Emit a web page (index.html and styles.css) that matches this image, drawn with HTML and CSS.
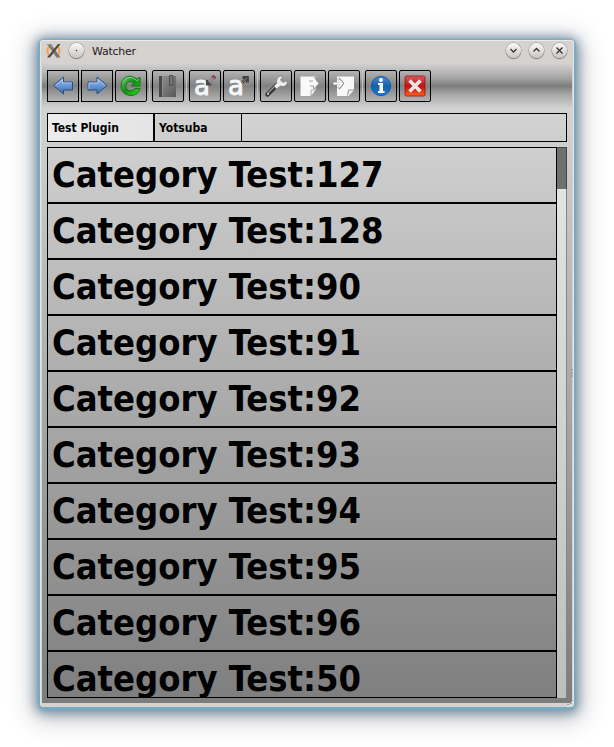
FILE: index.html
```html
<!DOCTYPE html>
<html lang="en">
<head>
<meta charset="utf-8">
<title>Watcher</title>
<link rel="stylesheet" href="styles.css">
</head>
<body>
<svg class="defs" width="0" height="0" aria-hidden="true">
  <defs>
    <linearGradient id="blue" x1="0" y1="0" x2="0" y2="1"><stop offset="0" stop-color="#9bbbe8"/><stop offset=".5" stop-color="#6d98d3"/><stop offset="1" stop-color="#3a65a8"/></linearGradient>
    <linearGradient id="green" x1="0" y1="0" x2="1" y2="1"><stop offset="0" stop-color="#74c774"/><stop offset=".5" stop-color="#178c17"/><stop offset="1" stop-color="#2fe01c"/></linearGradient>
    <linearGradient id="book" x1="0" y1="0" x2="1" y2="1"><stop offset="0" stop-color="#929292"/><stop offset="1" stop-color="#5a5a5a"/></linearGradient>
    <linearGradient id="info" x1="0" y1="0" x2="0" y2="1"><stop offset="0" stop-color="#4d8ccc"/><stop offset=".5" stop-color="#1260b0"/><stop offset="1" stop-color="#207bd2"/></linearGradient>
    <linearGradient id="red" x1="0" y1="0" x2="0" y2="1"><stop offset="0" stop-color="#d56060"/><stop offset=".5" stop-color="#bd1111"/><stop offset="1" stop-color="#ff6120"/></linearGradient>
  </defs>
</svg>
<main class="window">
  <header class="titlebar">
    <svg class="app-icon" viewBox="0 0 16 16">
      <path d="M3.500 3.500Q-.5 7 3 12.500M12 3.500q3 4 0 9" fill="none" stroke="#f4a048" stroke-width="2"/>
      <path d="M1 1h4l9.500 13.500h-4z" fill="#77756e"/><path d="M12 1h2.500L4 14.500H1z" fill="#4b4942"/>
      <path d="M2 1.500h2l3 4" fill="none" stroke="#a5a299"/>
    </svg>
    <span class="round"><svg viewBox="0 0 15 15"><circle cx="7.500" cy="7.500" r=".8" fill="#333"/></svg></span>
    <h1>Watcher</h1>
    <div class="controls">
      <span class="round"><svg viewBox="0 0 15 15"><path d="M4.500 6l3 3 3-3"/></svg></span>
      <span class="round"><svg viewBox="0 0 15 15"><path d="M4.500 8.500l3-3 3 3"/></svg></span>
      <span class="round"><svg viewBox="0 0 15 15"><path d="M4.500 4.500l6 6M10.500 4.500l-6 6"/></svg></span>
    </div>
  </header>
  <nav class="toolbar">
    <button class="square"><svg viewBox="0 0 32 32"><path d="M6.500 15.500L16.500 7v5h9v8h-9v4z" fill="url(#blue)" stroke="#284f86"/><path d="M8.500 15.300l7-5.800v3.500h9" fill="none" stroke="#b8d0f0" stroke-width=".8"/></svg></button>
    <button class="square"><svg viewBox="0 0 32 32"><path d="M26 15.500L16 7v5H7v8h9v4z" fill="url(#blue)" stroke="#284f86"/><path d="M8 19v-6h9V9.500l6.500 5.500" fill="none" stroke="#b8d0f0" stroke-width=".8"/></svg></button>
    <button><svg viewBox="0 0 32 32"><path d="M21.500 9l3.500-1.500V16h-9l2.800-3c-4-3-8-.5-7.800 3.500.2 4.500 6 5.500 9 2h5c-1 4.500-4.500 7-9 7C10 25.500 6 21.500 6 16 6 7 15 3 21.500 9z" fill="url(#green)" stroke="#087008" stroke-width=".8"/><path d="M8 12.500c3-6.500 10-6 13.500-2L24 9.500" fill="none" stroke="#8bd58b"/></svg></button>
    <i></i>
    <button><svg viewBox="0 0 32 32"><path d="M7 6h17v21H7z" fill="url(#book)"/><path d="M7 6h3v21H7z" fill="#484848"/><path d="M10.500 6v20" stroke="#999" stroke-width=".6"/><path d="M17.500 5.500h3.500v10.500l-1.700-1.500-1.800 1.500z" fill="#747474" stroke="#505050"/></svg></button>
    <i></i>
    <button><svg viewBox="0 0 32 32"><text class="letter" x="5" y="24.500">a</text><path d="M25 7l-6 6M18 10v4.500h4.500" fill="none" stroke="#484848" stroke-width="2.200"/><path d="M24.500 7.500L20 12" stroke="#b9a0a0" stroke-width="1.600"/><path d="M22.500 7.500l2-2 2 2-1.500 1.500" fill="none" stroke="#803f45" stroke-width="1.200"/></svg></button>
    <button><svg viewBox="0 0 32 32"><text class="letter" x="5" y="24.500">a</text><path d="M19 13l4.500-4.500M19.500 7.500h5v5" fill="none" stroke="#444" stroke-width="2.800"/><path d="M19 13L24 8" stroke="#858585"/></svg></button>
    <i></i>
    <button><svg viewBox="0 0 32 32"><path d="M7.500 24.500l8.500-8.500" stroke="#343434" stroke-width="4.500" stroke-linecap="round"/><path d="M8 23l7-7" stroke="#999" stroke-width="1.300"/><circle cx="8" cy="24" r="1" fill="#ddd"/><path d="M14 16l3-3c-1.500-4 1.500-7.500 6-7l-2.500 4 2.500 2.500 4-2c1 4.500-2.500 7-6.500 5.500l-4 3z" fill="#eee" stroke="#777" stroke-width=".7"/></svg></button>
    <button><svg viewBox="0 0 32 32"><path d="M6.500 6.500h15v13.500l-4 6h-11z" fill="#f9f9f9"/><path d="M17 26v-6h5z" fill="#f5f5f5" stroke="#999" stroke-width=".8"/><path d="M15 11.500h4.500V7l5.500 6.500-5.500 6V16H15z" fill="#f8f8f8"/><path d="M15 11h4M16 16h3.500v3M20 7l5 6.500-5 5.500" fill="none" stroke="#888" stroke-width=".8"/></svg></button>
    <button><svg viewBox="0 0 32 32"><path d="M9 6.500h17v13.500l-5.500 6H9z" fill="#f9f9f9"/><path d="M19.500 25.500l1-5.500H26" fill="#eee" stroke="#888" stroke-width=".9"/><path d="M5 13.500h8M10.500 8.500l4 5-4 5" fill="none" stroke="#999" stroke-width="3"/><path d="M5.500 13.500h8M10.500 9.500l3.500 4-3.500 4" fill="none" stroke="#fff" stroke-width="1.800"/></svg></button>
    <i></i>
    <button><svg viewBox="0 0 32 32"><circle cx="16" cy="16" r="9.700" fill="url(#info)" stroke="#0b4f9b" stroke-width=".8"/><circle cx="16" cy="10" r="2" fill="#fff"/><path d="M13 13h5v8h1.500v2H13v-2h1.500v-6H13z" fill="#fff"/></svg></button>
    <button><svg viewBox="0 0 32 32"><rect x="6" y="6" width="20" height="20" rx="1.500" fill="url(#red)" stroke="#a80b0b" stroke-width=".8"/><path d="M10.500 10.500l11 11M21.500 10.500l-11 11" stroke="#f1e6e6" stroke-width="3.500"/></svg></button>
  </nav>
  <div class="tabs"><div class="tab active">Test Plugin</div><div class="tab">Yotsuba</div></div>
  <section class="content">
    <ul class="list">
      <li>Category Test:127</li><li>Category Test:128</li><li>Category Test:90</li><li>Category Test:91</li><li>Category Test:92</li><li>Category Test:93</li><li>Category Test:94</li><li>Category Test:95</li><li>Category Test:96</li><li>Category Test:50</li>
    </ul>
    <div class="scrollbar"><div class="thumb"></div></div>
  </section>
  <svg class="side-grip" viewBox="0 0 3 9"><path d="M0 1h2M0 4h2M0 7h2" stroke="#888"/></svg>
  <svg class="corner-grip" viewBox="0 0 8 8"><path d="M1 6h2M4 5h2M5 2h2" stroke="#777"/><path d="M1 7h2M4 6h2M5 3h2" stroke="#fff"/></svg>
</main>
</body>
</html>
```
FILE: styles.css
```css
* { box-sizing: border-box; }
body { margin: 0; padding: 40px; width: 614px; height: 747px; overflow: hidden; background: #fff; font-family: "DejaVu Sans", sans-serif; color: #000; }
.defs { position: absolute; }
.window {
  position: relative; width: 534px; height: 667px; padding: 0 2px 4px; border-radius: 4px;
  display: flex; flex-direction: column;
  background: #d6d2d0;
  box-shadow: inset 0 1px #eceae9, inset 1px 0 #e5e4e3, inset -1px 0 #e5e4e3, 0 1px 2px 2px #78aac3, 0 2px 12px 4px rgba(67,105,132,.7), 0 5px 24px 8px rgba(60,60,75,.28);
}
.window::before { content: ""; position: absolute; inset: 24px 2px 4px; background: linear-gradient(#d4d4d4 0, #d2d2d2 8%, #7c7c7c 100%); }
.titlebar { height: 24px; flex: none; display: flex; align-items: center; padding: 0 5px 3px 4px; z-index: 1; }
.app-icon { width: 16px; height: 16px; }
.round { width: 15px; height: 15px; border-radius: 50%; background: linear-gradient(#fafafa, #c9c6c4); box-shadow: 0 0 0 .5px #8b8886, 0 1px 1px #7c7977; display: block; }
.round svg { display: block; width: 15px; height: 15px; fill: none; stroke: #333; stroke-width: 1.3; }
.round circle { stroke: none; }
.titlebar > .round { margin-left: 7px; }
h1 { font-size: 11px; line-height: 14px; font-weight: 400; letter-spacing: -.25px; margin: 3px 0 0 8px; color: #222; }
.controls { margin-left: auto; display: flex; gap: 8px; }
.toolbar { height: 44px; flex: none; display: flex; align-items: center; gap: 2px; padding: 0 5px; z-index: 1; background: linear-gradient(#d2d0cf 0, #a5a5a5 32%, #7d7d7d 50%, #a5a5a5 68%, #d2d2d2 100%); }
.toolbar button { width: 32px; height: 32px; padding: 0; border: 1px solid #000; border-radius: 2px; background: linear-gradient(#b3b3b3, #828282 50%, #b3b3b3); }
.toolbar .square { border-radius: 0; }
.toolbar button svg { display: block; width: 32px; height: 32px; margin: -1px; }
.toolbar i { width: 1px; height: 32px; background: #c6c6c6; }
.letter { font: 400 26px "DejaVu Sans", sans-serif; fill: #f6f6f6; stroke: #f6f6f6; stroke-width: .9px; }
.tabs { height: 29px; margin: 5px 5px 0; flex: none; z-index: 1; border: 1px solid #000; display: flex; background: linear-gradient(#d3d3d3, #cecece); font: 700 12px/27px "DejaVu Sans Condensed", "DejaVu Sans", sans-serif; font-stretch: condensed; }
.tab { width: 87px; padding: 1px 0 0 4px; border-right: 1px solid #000; white-space: nowrap; }
.active { width: 107px; border-right-width: 2px; background: linear-gradient(90deg, #ececec, #e4e4e4); }
.content { height: 551px; margin: 5px 5px 0; flex: none; z-index: 1; display: flex; }
.list { width: 510px; margin: 0; padding: 0; list-style: none; border: 1px solid #000; overflow: hidden; background: linear-gradient(#cfcfcf, #7f7f7f); font: 700 36px/53px "DejaVu Sans Condensed", "DejaVu Sans", sans-serif; font-stretch: condensed; }
.list li { height: 56px; padding-left: 4px; border-bottom: 2px solid #000; white-space: nowrap; }
.scrollbar { width: 10px; background: linear-gradient(#e6e6e6, #bebebe); border-right: 1px solid #858585; }
.thumb { width: 10px; height: 42px; background: #707070; border: solid #444; border-width: 1px 1px 0 0; }
.side-grip { position: absolute; width: 3px; height: 9px; right: 0; top: 329px; z-index: 2; }
.corner-grip { position: absolute; width: 8px; height: 8px; right: 0; bottom: 0; z-index: 2; }
```
